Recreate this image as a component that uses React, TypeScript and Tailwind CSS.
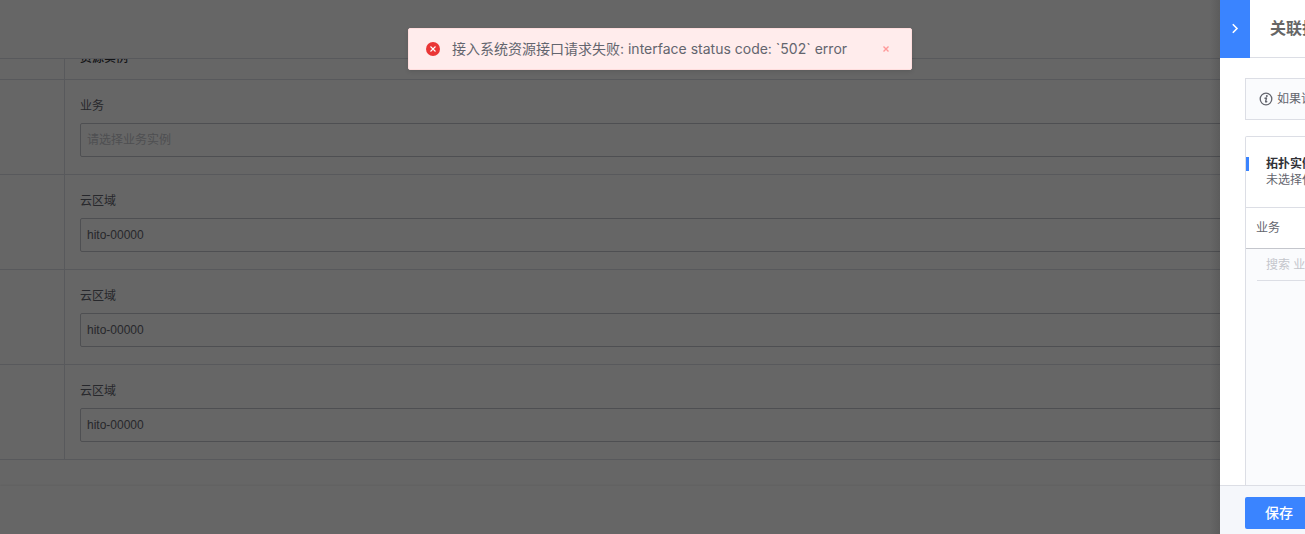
type Field = { id: string; label: string; value: string };

const fields: Field[] = [
  { id: "biz", label: "业务", value: "" },
  { id: "area-1", label: "云区域", value: "hito-00000" },
  { id: "area-2", label: "云区域", value: "hito-00000" },
  { id: "area-3", label: "云区域", value: "hito-00000" },
];

function ResourcePage() {
  return (
    <div className="flex h-full flex-col bg-white">
      <header className="h-[58px] shrink-0" />
      <main className="min-h-0 flex-1 overflow-hidden border-t border-[#dcdee5]">
        <table className="w-full table-fixed border-separate border-spacing-0 text-left">
          <colgroup>
            <col className="w-[65px]" />
            <col />
          </colgroup>
          <thead>
            <tr>
              <th className="border-r border-b border-[#dcdee5] p-0" />
              <th className="border-b border-[#dcdee5] p-0 font-medium text-[#313238]">
                <div className="flex h-5 items-end overflow-hidden px-[15px] pb-[15px] leading-none">
                  资源实例
                </div>
              </th>
            </tr>
          </thead>
          <tbody>
            {fields.map((field) => (
              <tr key={field.id}>
                <td className="border-r border-b border-[#dcdee5] p-0" />
                <td className="border-b border-[#dcdee5] pt-4 pb-[17px] pl-[15px] align-top">
                  <label htmlFor={field.id} className="mb-[7px] block leading-5">
                    {field.label}
                  </label>
                  <input
                    id={field.id}
                    type="text"
                    readOnly
                    defaultValue={field.value}
                    placeholder="请选择业务实例"
                    className="block h-[34px] w-full rounded-xs border border-[#c4c6cc] px-1.5 placeholder:text-[#c4c6cc]"
                  />
                </td>
              </tr>
            ))}
          </tbody>
        </table>
      </main>
      <footer className="h-12 shrink-0 shadow-[0_-1px_2px_rgba(0,0,0,0.06)]" />
    </div>
  );
}

function InfoIcon() {
  return (
    <svg viewBox="0 0 14 14" className="size-3.5 shrink-0" fill="none" aria-hidden="true">
      <circle cx="7" cy="7" r="5.8" stroke="#63656e" strokeWidth="1.3" />
      <circle cx="7.8" cy="4" r="1" fill="#63656e" />
      <path
        d="M6 6.2 L7.5 6 L6.6 9.6 Q6.6 10.3 7.8 9.7"
        stroke="#63656e"
        strokeWidth="1.4"
        strokeLinecap="round"
        strokeLinejoin="round"
      />
    </svg>
  );
}

function SidePanel() {
  return (
    <aside className="absolute inset-y-0 right-0 w-[85px] overflow-hidden bg-white">
      <div className="flex h-full w-[640px] flex-col whitespace-nowrap">
        <header className="flex h-[58px] shrink-0">
          <button type="button" aria-label="收起" className="flex w-[30px] items-center justify-center bg-[#3a84ff]">
            <svg viewBox="0 0 10 12" className="h-3 w-2.5" fill="none" aria-hidden="true">
              <path d="M2.8 1.2 L7 5.5 L2.8 9.8" stroke="white" strokeWidth="1.6" />
            </svg>
          </button>
          <h1 className="flex flex-1 items-center border-b border-[#dcdee5] pl-5 text-base font-bold text-[#666]">
            关联拓扑实例
          </h1>
        </header>
        <div className="flex min-h-0 flex-1 flex-col gap-4 px-[25px] pt-5">
          <p className="flex h-[42px] shrink-0 items-center gap-1 border border-[#dcdee5] bg-[#fafbfd] px-[13px]">
            <InfoIcon />
            如果该操作需要关联实例
          </p>
          <section className="flex min-h-0 flex-1 flex-col rounded-t-xs border border-b-0 border-[#dcdee5]">
            <div className="flex h-[71px] shrink-0 border-b border-[#dcdee5] pt-5 leading-4">
              <span className="h-3.5 w-[3px] bg-[#3a84ff]" />
              <div className="-mt-px pl-[17px]">
                <h2 className="font-bold text-[#313238]">拓扑实例</h2>
                <p>未选择任何实例</p>
              </div>
            </div>
            <div className="h-[41px] shrink-0 border-b border-[#c4c6cc] px-2.5 leading-10">业务</div>
            <div className="flex-1 bg-[#fafbfd] pl-[11px]">
              <input
                type="text"
                aria-label="搜索 业务"
                placeholder="搜索 业务"
                className="block h-8 w-full border-b border-[#dcdee5] bg-transparent px-[9px] placeholder:text-[#c4c6cc]"
              />
            </div>
          </section>
        </div>
        <footer className="flex h-[49px] shrink-0 items-start border-t border-[#dcdee5] bg-[#f5f7fb] px-[25px] pt-[11px]">
          <button type="button" className="h-8 rounded-xs bg-[#3a84ff] px-5 text-sm font-medium text-white">
            保存
          </button>
        </footer>
      </div>
    </aside>
  );
}

function Toast() {
  return (
    <div className="pointer-events-none absolute inset-x-0 top-7 flex justify-center pl-[15px]">
      <div
        role="alert"
        className="pointer-events-auto flex h-[42px] w-[504px] items-center rounded-xs border border-[#fdd] bg-[#ffecec] pr-[21px] pl-[17px] font-['Inter','Noto_Sans_CJK_SC',sans-serif] text-sm shadow-[0_2px_4px_rgba(0,0,0,0.1)]"
      >
        <svg viewBox="0 0 14 14" className="mr-3 size-3.5 shrink-0" aria-hidden="true">
          <circle cx="7" cy="7" r="7" fill="#ea3636" />
          <path d="M4.5 4.5 L9.5 9.5 M9.5 4.5 L4.5 9.5" stroke="white" strokeWidth="1.1" />
        </svg>
        <span className="flex-1 whitespace-nowrap">
          接入系统资源接口请求失败: interface status code: `502` error
        </span>
        <button type="button" aria-label="关闭">
          <svg viewBox="0 0 8 8" className="size-2" aria-hidden="true">
            <path d="M1.5 1.5 L6.5 6.5 M6.5 1.5 L1.5 6.5" stroke="#f99" strokeWidth="1.4" />
          </svg>
        </button>
      </div>
    </div>
  );
}

export default function App() {
  return (
    <div className="relative h-screen overflow-hidden font-['Liberation_Sans','Noto_Sans_CJK_SC',sans-serif] text-xs text-[#63656e]">
      <ResourcePage />
      <div className="absolute inset-0 bg-black/60" />
      <div className="absolute inset-y-0 right-[85px] w-2.5 bg-linear-to-r from-transparent to-black/10" />
      <SidePanel />
      <Toast />
    </div>
  );
}
